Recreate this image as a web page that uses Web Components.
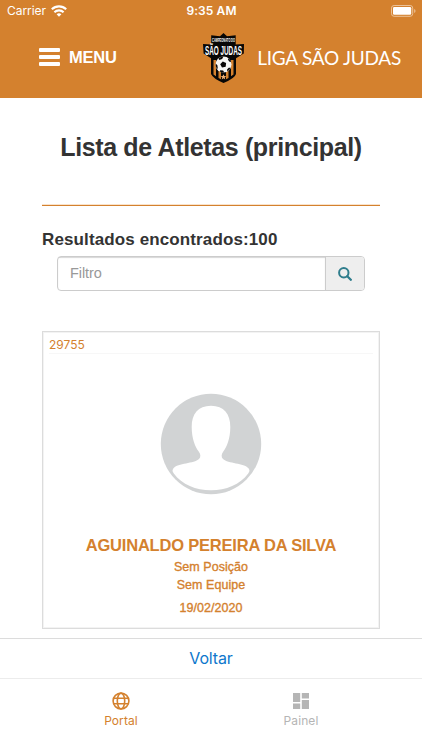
<!DOCTYPE html>
<html lang="pt-br">
<head>
<meta charset="utf-8">
<meta name="viewport" content="width=device-width, initial-scale=1">
<title>Liga São Judas</title>
<style>
  html, body {
    margin: 0;
    height: 100%;
    background: #fff;
    overflow: hidden;
  }
  body {
    --brand: #d4812e;
    font-family: "Liberation Sans", Arial, sans-serif;
    color: #333;
  }
</style>
</head>
<body>
<liga-app></liga-app>

<script>
class BaseElement extends HTMLElement {
  constructor() {
    super();
    this.attachShadow({ mode: "open" });
  }
  connectedCallback() {
    const template = document.createElement("template");
    template.innerHTML = `<style>${this.getStyles()}</style>${this.getTemplate()}`;
    this.shadowRoot.replaceChildren(template.content.cloneNode(true));
  }
}

class StatusBar extends BaseElement {
  getTemplate() {
    return `
      <div class="left">
        <span class="carrier">Carrier</span>
        <svg width="16" height="12" viewBox="0 0 16 12" fill="none" stroke="#fff" stroke-width="2.1">
          <path d="M.8 4.3a10.4 10.4 0 0 1 14.4 0"/>
          <path d="M3.4 7.2a6.7 6.7 0 0 1 9.2 0"/>
          <path d="M8 11.7 5.6 9.3a3.5 3.5 0 0 1 4.8 0z" fill="#fff" stroke="none"/>
        </svg>
      </div>
      <time>9:35 AM</time>
      <div class="right">
        <svg width="25" height="12" viewBox="0 0 25 12">
          <rect x=".5" y=".5" width="21.2" height="10.8" rx="2.6" fill="none" stroke="#ecc298"/>
          <rect x="2" y="2" width="18.2" height="7.8" rx="1.2" fill="#fff"/>
          <path d="M23.2 4v4q1.3-.6 1.3-2t-1.3-2z" fill="#ecc298"/>
        </svg>
      </div>`;
  }
  getStyles() {
    return `
      :host {
        display: grid;
        grid-template-columns: 1fr auto 1fr;
        align-items: center;
        height: 22px;
        padding: 0 6px 0 7px;
        color: #fff;
        font: 12px/22px Inter, sans-serif;
      }
      .left { display: flex; align-items: center; gap: 5px; }
      .carrier { letter-spacing: -.05px; }
      time { font-weight: 600; letter-spacing: .1px; }
      .right { display: flex; justify-content: flex-end; }
      svg { display: block; }`;
  }
}

class LigaCrest extends BaseElement {
  getTemplate() {
    return `
      <svg width="42" height="50" viewBox="0 0 42 50">
        <path d="M20.5 0 24 3.3 32.7 2.3V11.5L41 11l-.2 9.5L33 25.3V41q-1 4.2-12.5 9Q10 45.5 8 41V25.3L.6 20.5 0 11l8.2.5V2.3l8.8 1z" fill="#080706"/>
        <path d="M10.5 27v14.5l2.5 1.7V27zM15.5 36v9l2.5 1.3V36zM23 36v10.3l2.5-1.3v-9zM28 27v16.2l2.5-1.7V27z" fill="#d4812e"/>
        <circle cx="20.5" cy="31.5" r="8" fill="#f6f6f4"/>
        <path d="m19.8 28.4 3.300 1.700-.4 3.600-3.700.8-1.800-3.300zM15.500 25.400q2.400-1.900 5-1.900l-1.400 2.400-2.800 1zM12.600 30.600l1.800 1.600.4 3.300-1 .2q-1.500-2.300-1.200-5.100zM25.500 25.300q2 1.500 2.700 3.900l-2-.7-1.300-2.100zM27.600 34.800q-1 2.500-3.300 3.800l-.2-2 1.600-1.800zM17.300 37.300l2.800.3 1.200 1.800q-2.800.2-4.600-1z" fill="#080706"/>
        <path d="m20.5 41.200.8 1.900 2.100.1-1.700 1.300.6 2-1.800-1.200-1.800 1.200.6-2-1.700-1.300 2.100-.1z" fill="#efb277"/>
        <g transform="translate(20.5 9.4) scale(.56 1)"><text font-size="4.6">CAMPEONATO DO</text></g>
        <g transform="translate(20.5 21.6) scale(.51 1)"><text font-size="12.5">SÃO JUDAS</text></g>
      </svg>`;
  }
  getStyles() {
    return `
      :host { display: block; }
      svg { display: block; overflow: visible; }
      text {
        fill: #fff;
        font-family: "Liberation Sans", sans-serif;
        font-weight: bold;
        text-anchor: middle;
      }`;
  }
}

class AppHeader extends BaseElement {
  getTemplate() {
    return `
      <status-bar></status-bar>
      <nav>
        <div class="menu">
          <span class="burger"><i></i><i></i><i></i></span>
          <b>MENU</b>
        </div>
        <div class="brand">
          <liga-crest></liga-crest>
          <span><slot></slot></span>
        </div>
      </nav>`;
  }
  getStyles() {
    return `
      :host {
        display: block;
        height: 98px;
        background: var(--brand);
        color: #fff;
      }
      nav {
        display: flex;
        align-items: flex-start;
        justify-content: space-between;
        padding: 11px 21px 0 39px;
      }
      .menu, .brand { display: flex; }
      .menu { align-items: center; gap: 9px; padding-top: 14px; }
      .burger { display: grid; gap: 3px; width: 21px; }
      .burger i { height: 4px; border-radius: 1px; background: #fff; }
      b { font-size: 16.5px; line-height: 20px; letter-spacing: -.2px; }
      .brand { gap: 12px; }
      .brand span {
        padding-top: 13px;
        font: 19px/24px Lato, sans-serif;
        letter-spacing: -.25px;
        white-space: nowrap;
      }`;
  }
}

class SearchField extends BaseElement {
  getTemplate() {
    return `
      <label><slot></slot></label>
      <button aria-label="Buscar">
        <svg width="14" height="14" viewBox="0 0 14 14" fill="none" stroke="#2f7d8c" stroke-width="2">
          <circle cx="5.8" cy="5.8" r="4.7"/>
          <path d="m9.3 9.3 3.5 3.5" stroke-width="2.3" stroke-linecap="round"/>
        </svg>
      </button>`;
  }
  getStyles() {
    return `
      :host {
        display: flex;
        box-sizing: border-box;
        height: 35px;
        border: 1px solid #ccc;
        border-radius: 4px;
        overflow: hidden;
      }
      label {
        flex: 1;
        padding-left: 12px;
        color: #999;
        font-size: 14.5px;
        line-height: 33px;
        letter-spacing: -.1px;
        box-shadow: inset 0 1px 1px rgba(0, 0, 0, .16);
      }
      button {
        display: grid;
        place-items: center;
        width: 39px;
        padding: 0;
        border: 0;
        border-left: 1px solid #ccc;
        background: #eee;
      }`;
  }
}

class AthleteCard extends BaseElement {
  getTemplate() {
    return `
      <div class="code"><slot name="code"></slot></div>
      <svg width="102" height="102" viewBox="0 0 102 102">
        <circle cx="51" cy="51" r="50.2" fill="#d1d3d4"/>
        <path d="M51 12.8C38 12.8 31.7 21 31.7 34c0 12 3.6 20 7 24.5 2 2.7 2.3 5.7.3 7.5-5 5-21 3.5-25.7 9.5-1.5 2-.5 3.5.5 5C22 91.5 36 97.3 51 97.3s29-5.800 37.200-16.800c1-1.500 2-3 .5-5C84 69.500 68 71 63 66c-2-1.800-1.700-4.800.3-7.500 3.400-4.500 7-12.500 7-24.500 0-13-6.300-21.200-19.300-21.200z" fill="#fff"/>
      </svg>
      <h3><slot name="name"></slot></h3>
      <p><slot name="position"></slot></p>
      <p><slot name="team"></slot></p>
      <p class="date"><slot name="date"></slot></p>`;
  }
  getStyles() {
    return `
      :host {
        display: flex;
        flex-direction: column;
        align-items: center;
        box-sizing: border-box;
        height: 298px;
        padding: 1px 6px;
        border: 1px solid #dcdcdc;
        box-shadow: inset 0 0 0 1px #f3f3f3;
        color: var(--brand);
      }
      .code {
        align-self: stretch;
        height: 20px;
        border-bottom: 1px solid #f7f7f7;
        font: 12px/23px Inter, sans-serif;
      }
      svg { display: block; margin-top: 39px; }
      h3 {
        margin: 40px 0 3px;
        font-size: 16.5px;
        line-height: 20px;
        letter-spacing: -.2px;
        white-space: nowrap;
      }
      p {
        margin: 0;
        font-size: 12.5px;
        line-height: 18px;
        letter-spacing: .05px;
        -webkit-text-stroke: .35px currentColor;
      }
      .date { margin-top: 5px; }`;
  }
}

class TabItem extends BaseElement {
  getTemplate() {
    return `<slot name="icon"></slot><span><slot></slot></span>`;
  }
  getStyles() {
    return `
      :host {
        flex: 1;
        display: flex;
        flex-direction: column;
        align-items: center;
        padding-top: 12px;
        color: #b5b5b5;
        font: 12px/16px Inter, sans-serif;
      }
      :host([active]) { color: var(--brand); }
      span { margin-top: 2px; letter-spacing: .1px; }
      ::slotted(svg) { display: block; }`;
  }
}

class LigaApp extends BaseElement {
  getTemplate() {
    return `
      <app-header>LIGA SÃO JUDAS</app-header>
      <main>
        <h1>Lista de Atletas (principal)</h1>
        <div class="rule"></div>
        <h2>Resultados encontrados:100</h2>
        <search-field>Filtro</search-field>
        <athlete-card>
          <span slot="code">29755</span>
          <span slot="name">AGUINALDO PEREIRA DA SILVA</span>
          <span slot="position">Sem Posição</span>
          <span slot="team">Sem Equipe</span>
          <span slot="date">19/02/2020</span>
        </athlete-card>
      </main>
      <a class="back">Voltar</a>
      <footer>
        <tab-item active>
          <svg slot="icon" width="20" height="20" viewBox="0 0 20 20" fill="none" stroke="currentColor" stroke-width="1.6">
            <circle cx="10" cy="10" r="7.9"/>
            <ellipse cx="10" cy="10" rx="3.7" ry="7.9"/>
            <path d="M2.6 7.2h14.8M2.6 12.8h14.8"/>
          </svg>
          Portal
        </tab-item>
        <tab-item>
          <svg slot="icon" width="20" height="20" viewBox="0 0 20 20" fill="currentColor">
            <path d="M2 2h7.2v9H2zM10.8 2H18v5.4h-7.2zM2 12.6h7.2V18H2zM10.8 9H18v9h-7.2z"/>
          </svg>
          Painel
        </tab-item>
      </footer>`;
  }
  getStyles() {
    return `
      :host {
        display: flex;
        flex-direction: column;
        height: 750px;
      }
      main {
        flex: 1;
        padding: 0 42px;
      }
      h1 {
        margin: 34px 0 0;
        font-size: 25px;
        line-height: 30px;
        letter-spacing: -.36px;
        text-align: center;
        white-space: nowrap;
      }
      .rule {
        height: 1px;
        margin-top: 43px;
        background: var(--brand);
        box-shadow: 0 -1px #f9e3cc;
      }
      h2 {
        margin: 23px 0 0;
        font-size: 17px;
        line-height: 21px;
        letter-spacing: .12px;
      }
      search-field { margin: 6px 15px 0; }
      athlete-card { margin-top: 40px; }
      .back {
        height: 39px;
        border-top: 1px solid #dcdcdc;
        border-bottom: 1px solid #ececec;
        color: #0d77cc;
        font: 16px/39px Inter, sans-serif;
        letter-spacing: -.15px;
        text-align: center;
      }
      footer { display: flex; height: 71px; padding: 0 31px; }`;
  }
}

customElements.define("status-bar", StatusBar);
customElements.define("liga-crest", LigaCrest);
customElements.define("app-header", AppHeader);
customElements.define("search-field", SearchField);
customElements.define("athlete-card", AthleteCard);
customElements.define("tab-item", TabItem);
customElements.define("liga-app", LigaApp);
</script>
</body>
</html>
